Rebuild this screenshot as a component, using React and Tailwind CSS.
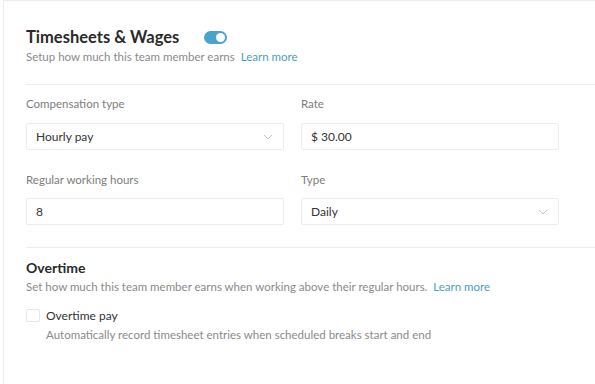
import React from "react";

const Chevron = () => (
  <svg width="10" height="6" viewBox="0 0 10 6" fill="none">
    <path d="M1 1l4 4 4-4" stroke="#c4c4c4" strokeWidth="1" />
  </svg>
);

export default function App() {
  return (
    <div className="w-[595px] h-[384px] bg-white overflow-hidden" style={{ fontFamily: "Lato, 'Open Sans', sans-serif" }}>
      <div className="ml-[3px] h-full border-l border-t border-[#ececec] pl-[22px] pt-[25px]">
        <div className="flex items-center gap-[25px]">
          <h1 className="text-[16.5px] font-bold text-[#2a2a2a] leading-[22px]">Timesheets &amp; Wages</h1>
          <div className="w-[23px] h-[13px] rounded-full bg-[#4aa3cc] flex items-center justify-end pr-[2px]">
            <div className="w-[9px] h-[9px] rounded-full bg-white" />
          </div>
        </div>
        <p className="mt-[1px] text-[11.5px] text-[#8a8a8a] leading-[16px]">
          Setup how much this team member earns <span className="ml-[3px] text-[#4a9fc0]">Learn more</span>
        </p>
        <div className="mt-[19px] border-t border-[#eeeeee]" />

        <div className="mt-[11px] grid grid-cols-[258px_258px] gap-x-[17px]">
          <div>
            <div className="text-[11.5px] text-[#7d7d7d] leading-[16px]">Compensation type</div>
            <div className="mt-[11px] h-[27px] border border-[#ececec] rounded-[2px] flex items-center justify-between pl-[9px] pr-[10px]">
              <span className="text-[12px] text-[#333]">Hourly pay</span>
              <Chevron />
            </div>
          </div>
          <div>
            <div className="text-[11.5px] text-[#7d7d7d] leading-[16px]">Rate</div>
            <div className="mt-[11px] h-[27px] border border-[#ececec] rounded-[2px] flex items-center pl-[9px]">
              <span className="text-[12px] text-[#333]">$ 30.00</span>
            </div>
          </div>
          <div className="mt-[22px]">
            <div className="text-[11.5px] text-[#7d7d7d] leading-[16px]">Regular working hours</div>
            <div className="mt-[10px] h-[27px] border border-[#ececec] rounded-[2px] flex items-center pl-[9px]">
              <span className="text-[12px] text-[#333]">8</span>
            </div>
          </div>
          <div className="mt-[22px]">
            <div className="text-[11.5px] text-[#7d7d7d] leading-[16px]">Type</div>
            <div className="mt-[10px] h-[27px] border border-[#ececec] rounded-[2px] flex items-center justify-between pl-[9px] pr-[10px]">
              <span className="text-[12px] text-[#333]">Daily</span>
              <Chevron />
            </div>
          </div>
        </div>

        <div className="mt-[22px] border-t border-[#eeeeee]" />
        <h2 className="mt-[11px] text-[14px] font-bold text-[#2a2a2a] leading-[18px]">Overtime</h2>
        <p className="mt-[2px] text-[11.5px] text-[#8a8a8a] leading-[16px]">
          Set how much this team member earns when working above their regular hours. <span className="ml-[3px] text-[#4a9fc0]">Learn more</span>
        </p>
        <div className="mt-[13px] flex items-start gap-[6px]">
          <div className="mt-[1px] w-[14px] h-[13px] border border-[#e6e6e6] rounded-[2px]" />
          <div>
            <div className="text-[12px] text-[#333] leading-[16px]">Overtime pay</div>
            <div className="mt-[3px] text-[11.5px] text-[#8a8a8a] leading-[16px]">Automatically record timesheet entries when scheduled breaks start and end</div>
          </div>
        </div>
      </div>
    </div>
  );
}
